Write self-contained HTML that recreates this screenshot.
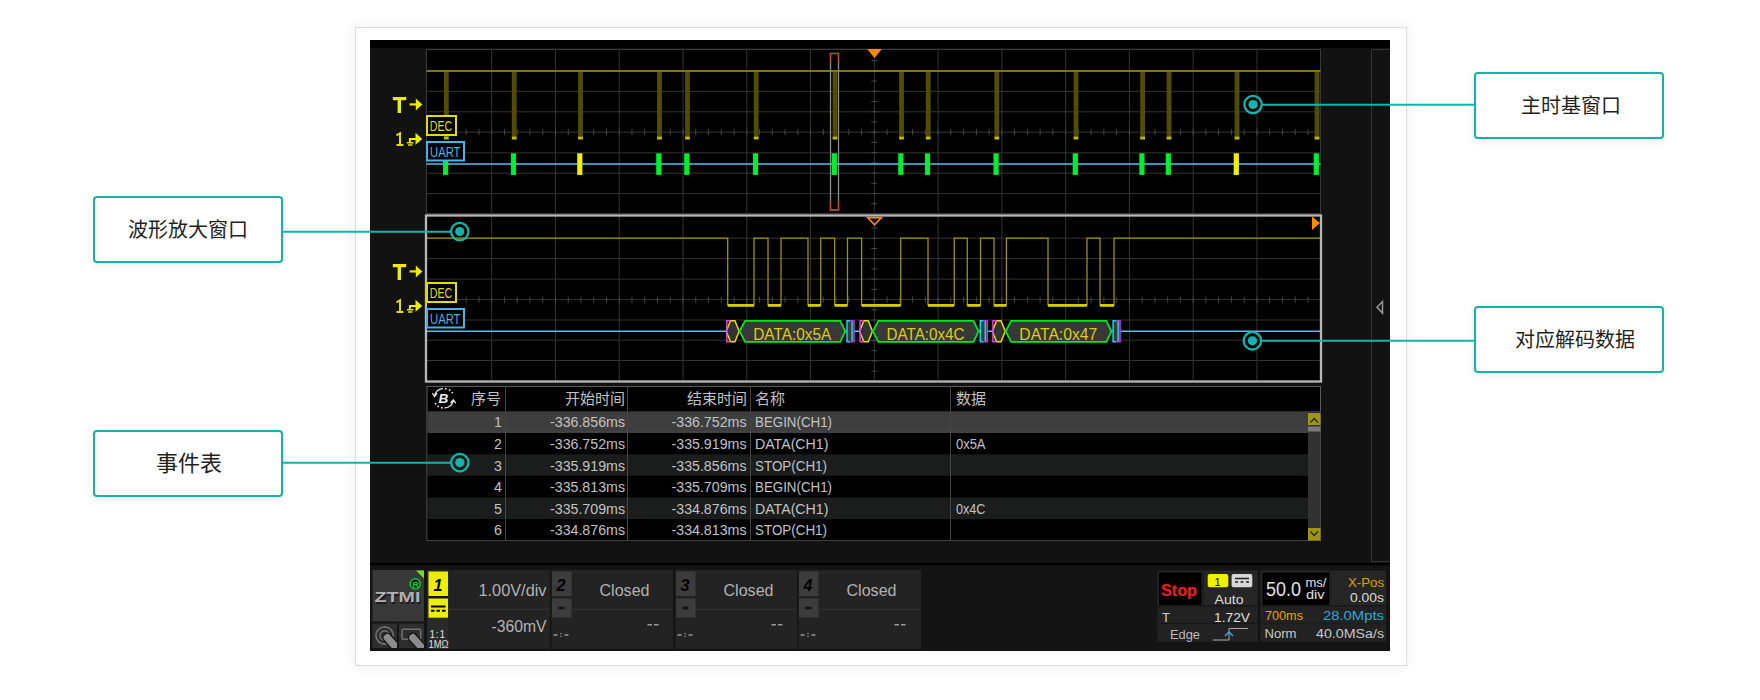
<!DOCTYPE html>
<html lang="zh-CN"><head><meta charset="utf-8">
<style>
html,body{margin:0;padding:0;background:#fff;width:1760px;height:700px;overflow:hidden;}
body{position:relative;font-family:"Liberation Sans", sans-serif;}
.card{position:absolute;left:355px;top:27px;width:1050px;height:637px;border:1px solid #dcdcdc;background:#fff;box-shadow:0 0 14px rgba(0,0,0,0.07);}
.box{position:absolute;width:186px;height:63px;border:2px solid #13b2ab;border-radius:4px;background:#fff;box-shadow:0 2px 10px rgba(0,0,0,0.08);
 font-size:20px;color:#231f1f;display:flex;align-items:center;justify-content:center;line-height:1;}
svg{position:absolute;left:0;top:0;}
svg text{font-family:"Liberation Sans", sans-serif;}
</style></head><body>
<div class="card"></div>
<svg width="1760" height="700" viewBox="0 0 1760 700"><rect x="370" y="40" width="1020" height="611" fill="#121212"/><rect x="370" y="40" width="1020" height="8" fill="#000"/><path d="M1390 49.5 H1371.5 V561.5 H1390" fill="none" stroke="#343434" stroke-width="1"/><rect x="426.5" y="49.5" width="894.0" height="164.0" fill="#000" stroke="#383838" stroke-width="1"/><path d="M426.5 71.0H1320.5M426.5 91.4H1320.5M426.5 111.8H1320.5M426.5 132.2H1320.5M426.5 152.8H1320.5M426.5 173.2H1320.5M426.5 193.6H1320.5M491.7 49.5V213.5M555.47 49.5V213.5M619.24 49.5V213.5M683.01 49.5V213.5M746.78 49.5V213.5M810.55 49.5V213.5M874.32 49.5V213.5M938.09 49.5V213.5M1001.86 49.5V213.5M1065.63 49.5V213.5M1129.4 49.5V213.5M1193.17 49.5V213.5M1256.94 49.5V213.5" stroke="#333333" stroke-width="1" fill="none"/><path d="M440.68 129.2V135.2M453.44 129.2V135.2M466.19 129.2V135.2M478.95 129.2V135.2M491.7 129.2V135.2M504.45 129.2V135.2M517.21 129.2V135.2M529.96 129.2V135.2M542.72 129.2V135.2M555.47 129.2V135.2M568.22 129.2V135.2M580.98 129.2V135.2M593.73 129.2V135.2M606.49 129.2V135.2M619.24 129.2V135.2M631.99 129.2V135.2M644.75 129.2V135.2M657.5 129.2V135.2M670.26 129.2V135.2M683.01 129.2V135.2M695.76 129.2V135.2M708.52 129.2V135.2M721.27 129.2V135.2M734.03 129.2V135.2M746.78 129.2V135.2M759.53 129.2V135.2M772.29 129.2V135.2M785.04 129.2V135.2M797.8 129.2V135.2M810.55 129.2V135.2M823.3 129.2V135.2M836.06 129.2V135.2M848.81 129.2V135.2M861.57 129.2V135.2M874.32 129.2V135.2M887.07 129.2V135.2M899.83 129.2V135.2M912.58 129.2V135.2M925.34 129.2V135.2M938.09 129.2V135.2M950.84 129.2V135.2M963.6 129.2V135.2M976.35 129.2V135.2M989.11 129.2V135.2M1001.86 129.2V135.2M1014.61 129.2V135.2M1027.37 129.2V135.2M1040.12 129.2V135.2M1052.88 129.2V135.2M1065.63 129.2V135.2M1078.38 129.2V135.2M1091.14 129.2V135.2M1103.89 129.2V135.2M1116.65 129.2V135.2M1129.4 129.2V135.2M1142.15 129.2V135.2M1154.91 129.2V135.2M1167.66 129.2V135.2M1180.42 129.2V135.2M1193.17 129.2V135.2M1205.92 129.2V135.2M1218.68 129.2V135.2M1231.43 129.2V135.2M1244.19 129.2V135.2M1256.94 129.2V135.2M1269.69 129.2V135.2M1282.45 129.2V135.2M1295.2 129.2V135.2M1307.96 129.2V135.2M871.32 50.44H877.32M871.32 60.66H877.32M871.32 70.88H877.32M871.32 81.1H877.32M871.32 91.32H877.32M871.32 101.54H877.32M871.32 111.76H877.32M871.32 121.98H877.32M871.32 132.2H877.32M871.32 142.42H877.32M871.32 152.64H877.32M871.32 162.86H877.32M871.32 173.08H877.32M871.32 183.3H877.32M871.32 193.52H877.32M871.32 203.74H877.32" stroke="#474747" stroke-width="1"/><line x1="426.5" y1="71" x2="1320.5" y2="71" stroke="#a09800" stroke-width="1.6"/><rect x="443.9" y="72" width="4.8" height="64" fill="#524d00"/><rect x="443.9" y="136.4" width="4.8" height="3.1" fill="#c4bc00"/><rect x="511.8" y="72" width="4.8" height="64" fill="#524d00"/><rect x="511.8" y="136.4" width="4.8" height="3.1" fill="#c4bc00"/><rect x="578.1" y="72" width="4.8" height="64" fill="#524d00"/><rect x="578.1" y="136.4" width="4.8" height="3.1" fill="#c4bc00"/><rect x="657.1" y="72" width="4.8" height="64" fill="#524d00"/><rect x="657.1" y="136.4" width="4.8" height="3.1" fill="#c4bc00"/><rect x="685.1" y="72" width="4.8" height="64" fill="#524d00"/><rect x="685.1" y="136.4" width="4.8" height="3.1" fill="#c4bc00"/><rect x="753.8" y="72" width="4.8" height="64" fill="#524d00"/><rect x="753.8" y="136.4" width="4.8" height="3.1" fill="#c4bc00"/><rect x="832.6" y="72" width="4.8" height="64" fill="#524d00"/><rect x="832.6" y="136.4" width="4.8" height="3.1" fill="#c4bc00"/><rect x="899.1" y="72" width="4.8" height="64" fill="#524d00"/><rect x="899.1" y="136.4" width="4.8" height="3.1" fill="#c4bc00"/><rect x="925.8" y="72" width="4.8" height="64" fill="#524d00"/><rect x="925.8" y="136.4" width="4.8" height="3.1" fill="#c4bc00"/><rect x="994.4" y="72" width="4.8" height="64" fill="#524d00"/><rect x="994.4" y="136.4" width="4.8" height="3.1" fill="#c4bc00"/><rect x="1073.6" y="72" width="4.8" height="64" fill="#524d00"/><rect x="1073.6" y="136.4" width="4.8" height="3.1" fill="#c4bc00"/><rect x="1140.2" y="72" width="4.8" height="64" fill="#524d00"/><rect x="1140.2" y="136.4" width="4.8" height="3.1" fill="#c4bc00"/><rect x="1166.6" y="72" width="4.8" height="64" fill="#524d00"/><rect x="1166.6" y="136.4" width="4.8" height="3.1" fill="#c4bc00"/><rect x="1234.6" y="72" width="4.8" height="64" fill="#524d00"/><rect x="1234.6" y="136.4" width="4.8" height="3.1" fill="#c4bc00"/><rect x="1314.6" y="72" width="4.8" height="64" fill="#524d00"/><rect x="1314.6" y="136.4" width="4.8" height="3.1" fill="#c4bc00"/><rect x="830.5" y="53.5" width="8" height="156.5" fill="none" stroke="#8a8a8a" stroke-width="1.3"/><path d="M830.5 62V53.5H838.5V62M830.5 201.5V210H838.5V201.5" fill="none" stroke="#c03838" stroke-width="1.5"/><path d="M867.2 49 H881.8 L874.5 58 Z" fill="#ff8a00"/><line x1="426.5" y1="164" x2="1320.5" y2="164" stroke="#55c0ee" stroke-width="1.5"/><rect x="443.0" y="153.3" width="5.2" height="21.6" fill="#00ee30"/><rect x="510.9" y="153.3" width="5.2" height="21.6" fill="#00ee30"/><rect x="577.2" y="153.3" width="5.2" height="21.6" fill="#f0f000"/><rect x="656.2" y="153.3" width="5.2" height="21.6" fill="#00ee30"/><rect x="684.2" y="153.3" width="5.2" height="21.6" fill="#00ee30"/><rect x="752.9" y="153.3" width="5.2" height="21.6" fill="#00ee30"/><rect x="831.7" y="153.3" width="5.2" height="21.6" fill="#00ee30"/><rect x="898.2" y="153.3" width="5.2" height="21.6" fill="#00ee30"/><rect x="924.9" y="153.3" width="5.2" height="21.6" fill="#00ee30"/><rect x="993.5" y="153.3" width="5.2" height="21.6" fill="#00ee30"/><rect x="1072.7" y="153.3" width="5.2" height="21.6" fill="#00ee30"/><rect x="1139.3" y="153.3" width="5.2" height="21.6" fill="#00ee30"/><rect x="1165.7" y="153.3" width="5.2" height="21.6" fill="#00ee30"/><rect x="1233.7" y="153.3" width="5.2" height="21.6" fill="#f0f000"/><rect x="1313.7" y="153.3" width="5.2" height="21.6" fill="#00ee30"/><rect x="426.5" y="215.5" width="894.0" height="166.0" fill="#000"/><rect x="426.5" y="215.5" width="894.0" height="166.0" fill="#000" stroke="#383838" stroke-width="1"/><path d="M426.5 238.2H1320.5M426.5 258.6H1320.5M426.5 279.1H1320.5M426.5 299.6H1320.5M426.5 320.0H1320.5M426.5 340.2H1320.5M426.5 360.5H1320.5M491.7 215.5V381.5M555.47 215.5V381.5M619.24 215.5V381.5M683.01 215.5V381.5M746.78 215.5V381.5M810.55 215.5V381.5M874.32 215.5V381.5M938.09 215.5V381.5M1001.86 215.5V381.5M1065.63 215.5V381.5M1129.4 215.5V381.5M1193.17 215.5V381.5M1256.94 215.5V381.5" stroke="#333333" stroke-width="1" fill="none"/><path d="M440.68 296.6V302.6M453.44 296.6V302.6M466.19 296.6V302.6M478.95 296.6V302.6M491.7 296.6V302.6M504.45 296.6V302.6M517.21 296.6V302.6M529.96 296.6V302.6M542.72 296.6V302.6M555.47 296.6V302.6M568.22 296.6V302.6M580.98 296.6V302.6M593.73 296.6V302.6M606.49 296.6V302.6M619.24 296.6V302.6M631.99 296.6V302.6M644.75 296.6V302.6M657.5 296.6V302.6M670.26 296.6V302.6M683.01 296.6V302.6M695.76 296.6V302.6M708.52 296.6V302.6M721.27 296.6V302.6M734.03 296.6V302.6M746.78 296.6V302.6M759.53 296.6V302.6M772.29 296.6V302.6M785.04 296.6V302.6M797.8 296.6V302.6M810.55 296.6V302.6M823.3 296.6V302.6M836.06 296.6V302.6M848.81 296.6V302.6M861.57 296.6V302.6M874.32 296.6V302.6M887.07 296.6V302.6M899.83 296.6V302.6M912.58 296.6V302.6M925.34 296.6V302.6M938.09 296.6V302.6M950.84 296.6V302.6M963.6 296.6V302.6M976.35 296.6V302.6M989.11 296.6V302.6M1001.86 296.6V302.6M1014.61 296.6V302.6M1027.37 296.6V302.6M1040.12 296.6V302.6M1052.88 296.6V302.6M1065.63 296.6V302.6M1078.38 296.6V302.6M1091.14 296.6V302.6M1103.89 296.6V302.6M1116.65 296.6V302.6M1129.4 296.6V302.6M1142.15 296.6V302.6M1154.91 296.6V302.6M1167.66 296.6V302.6M1180.42 296.6V302.6M1193.17 296.6V302.6M1205.92 296.6V302.6M1218.68 296.6V302.6M1231.43 296.6V302.6M1244.19 296.6V302.6M1256.94 296.6V302.6M1269.69 296.6V302.6M1282.45 296.6V302.6M1295.2 296.6V302.6M1307.96 296.6V302.6M871.32 217.84H877.32M871.32 228.06H877.32M871.32 238.28H877.32M871.32 248.5H877.32M871.32 258.72H877.32M871.32 268.94H877.32M871.32 279.16H877.32M871.32 289.38H877.32M871.32 299.6H877.32M871.32 309.82H877.32M871.32 320.04H877.32M871.32 330.26H877.32M871.32 340.48H877.32M871.32 350.7H877.32M871.32 360.92H877.32M871.32 371.14H877.32M871.32 381.36H877.32" stroke="#474747" stroke-width="1"/><path d="M426.5 238H727.7V305.2H754V238H768V305.2H781V238H808V305.2H820.7V238H834.7V305.2H847.5V238H861.6V305.2H900.7V238H928V305.2H954.2V238H967.3V305.2H980.5V238H994V305.2H1006.4V238H1048V305.2H1087V238H1100V305.2H1114V238H1320.5" fill="none" stroke="#a09600" stroke-width="1.25"/><rect x="727.7" y="304.0" width="26.299999999999955" height="2.8" fill="#d4cb00"/><rect x="768" y="304.0" width="13" height="2.8" fill="#d4cb00"/><rect x="808" y="304.0" width="12.700000000000045" height="2.8" fill="#d4cb00"/><rect x="834.7" y="304.0" width="12.799999999999955" height="2.8" fill="#d4cb00"/><rect x="861.6" y="304.0" width="39.10000000000002" height="2.8" fill="#d4cb00"/><rect x="928" y="304.0" width="26.200000000000045" height="2.8" fill="#d4cb00"/><rect x="967.3" y="304.0" width="13.200000000000045" height="2.8" fill="#d4cb00"/><rect x="994" y="304.0" width="12.399999999999977" height="2.8" fill="#d4cb00"/><rect x="1048" y="304.0" width="39" height="2.8" fill="#d4cb00"/><rect x="1100" y="304.0" width="14" height="2.8" fill="#d4cb00"/><line x1="426.5" y1="331.2" x2="1320.5" y2="331.2" stroke="#55c0ee" stroke-width="1.5"/><path d="M730.5 320.8H734.9000000000001L739.2 331.3L734.9000000000001 341.8H730.5L726.2 331.3Z" fill="#333" stroke="#e8e000" stroke-width="1.5"/><path d="M730.7 320.8H726.8000000000001V341.8H730.7" fill="none" stroke="#e040e0" stroke-width="1.5"/><path d="M745.1 320.8H840.2L845.2 331.3L840.2 341.8H745.1L739.6 331.3Z" fill="#383838" stroke="#00e81c" stroke-width="1.8"/><text x="753.2" y="339.6" font-size="16" fill="#dcd200" textLength="78" lengthAdjust="spacingAndGlyphs">DATA:0x5A</text><rect x="847.2" y="320.8" width="7" height="21.0" fill="#3a3a3a"/><path d="M850.2 320.8H847.0V341.8H850.2M852.0 320.8V341.8" fill="none" stroke="#10d8f0" stroke-width="1.5"/><path d="M850.2 320.8H854.0V341.8H850.2" fill="none" stroke="#c030e0" stroke-width="1.5"/><path d="M863.8 320.8H868.2L872.5 331.3L868.2 341.8H863.8L859.5 331.3Z" fill="#333" stroke="#e8e000" stroke-width="1.5"/><path d="M864.0 320.8H860.1V341.8H864.0" fill="none" stroke="#e040e0" stroke-width="1.5"/><path d="M878.4 320.8H973.5L978.5 331.3L973.5 341.8H878.4L872.9 331.3Z" fill="#383838" stroke="#00e81c" stroke-width="1.8"/><text x="886.5" y="339.6" font-size="16" fill="#dcd200" textLength="78" lengthAdjust="spacingAndGlyphs">DATA:0x4C</text><rect x="980.5" y="320.8" width="7" height="21.0" fill="#3a3a3a"/><path d="M983.5 320.8H980.3V341.8H983.5M985.3 320.8V341.8" fill="none" stroke="#10d8f0" stroke-width="1.5"/><path d="M983.5 320.8H987.3V341.8H983.5" fill="none" stroke="#c030e0" stroke-width="1.5"/><path d="M996.5999999999999 320.8H1001.0L1005.3 331.3L1001.0 341.8H996.5999999999999L992.3 331.3Z" fill="#333" stroke="#e8e000" stroke-width="1.5"/><path d="M996.8 320.8H992.9V341.8H996.8" fill="none" stroke="#e040e0" stroke-width="1.5"/><path d="M1011.1999999999999 320.8H1106.3L1111.3 331.3L1106.3 341.8H1011.1999999999999L1005.6999999999999 331.3Z" fill="#383838" stroke="#00e81c" stroke-width="1.8"/><text x="1019.3" y="339.6" font-size="16" fill="#dcd200" textLength="78" lengthAdjust="spacingAndGlyphs">DATA:0x47</text><rect x="1113.3" y="320.8" width="7" height="21.0" fill="#3a3a3a"/><path d="M1116.3 320.8H1113.1V341.8H1116.3M1118.1 320.8V341.8" fill="none" stroke="#10d8f0" stroke-width="1.5"/><path d="M1116.3 320.8H1120.1V341.8H1116.3" fill="none" stroke="#c030e0" stroke-width="1.5"/><rect x="426" y="215.5" width="895" height="166" fill="none" stroke="#b8b8b8" stroke-width="2.3"/><path d="M867.8 217.8 H881.2 L874.5 224.8 Z" fill="none" stroke="#ff8a00" stroke-width="1.6"/><path d="M1312 216.5 V230 L1320 223 Z" fill="#ff8a00"/><path d="M1382.5 301.5 V313 L1377 307.2 Z" fill="none" stroke="#9a9a9a" stroke-width="1.5"/><path d="M392.8 97.1H406.2V100.2H401V112.9H397.6V100.2H392.8Z" fill="#ecec00"/><path d="M409.6 104.4H416.5" stroke="#ecec00" stroke-width="2.2"/><path d="M415.8 98.5L422.3 104.4L415.8 110.5Z" fill="#ecec00"/><rect x="427" y="116" width="29" height="19" fill="#000" stroke="#e2dc00" stroke-width="2"/><text x="429.8" y="130.7" font-size="14.5" fill="#e2dc00" textLength="22.3" lengthAdjust="spacingAndGlyphs">DEC</text><path d="M396.5 135.3L400 133.2V145M396.5 145H403.4" fill="none" stroke="#e2dc00" stroke-width="2"/><path d="M409.9 142.7V139H416" fill="none" stroke="#ecec00" stroke-width="2"/><path d="M406.8 142.7H413.5M408 145H412.5" stroke="#e2dc00" stroke-width="1.6"/><path d="M415.5 132.8L422.2 139L415.5 144.8Z" fill="#ecec00"/><rect x="427" y="142" width="37" height="18.5" fill="#000" stroke="#48b4e4" stroke-width="2"/><text x="430" y="156.5" font-size="14.5" fill="#48b4e4" textLength="30.5" lengthAdjust="spacingAndGlyphs">UART</text><path d="M392.8 264.1H406.2V267.2H401V279.9H397.6V267.2H392.8Z" fill="#ecec00"/><path d="M409.6 271.4H416.5" stroke="#ecec00" stroke-width="2.2"/><path d="M415.8 265.5L422.3 271.4L415.8 277.5Z" fill="#ecec00"/><rect x="427" y="283" width="29" height="19" fill="#000" stroke="#e2dc00" stroke-width="2"/><text x="429.8" y="297.7" font-size="14.5" fill="#e2dc00" textLength="22.3" lengthAdjust="spacingAndGlyphs">DEC</text><path d="M396.5 302.3L400 300.2V312M396.5 312H403.4" fill="none" stroke="#e2dc00" stroke-width="2"/><path d="M409.9 309.7V306H416" fill="none" stroke="#ecec00" stroke-width="2"/><path d="M406.8 309.7H413.5M408 312H412.5" stroke="#e2dc00" stroke-width="1.6"/><path d="M415.5 299.8L422.2 306L415.5 311.8Z" fill="#ecec00"/><rect x="427" y="309" width="37" height="18.5" fill="#000" stroke="#48b4e4" stroke-width="2"/><text x="430" y="323.5" font-size="14.5" fill="#48b4e4" textLength="30.5" lengthAdjust="spacingAndGlyphs">UART</text><rect x="427" y="386.5" width="893.5" height="154.0" fill="#000" stroke="#5a5a5a" stroke-width="1"/><rect x="427.5" y="411.3" width="880.5" height="21.4" fill="#3e3e3e"/><rect x="427.5" y="432.7" width="880.5" height="21.6" fill="#000"/><rect x="427.5" y="454.3" width="880.5" height="21.6" fill="#1a1d1b"/><rect x="427.5" y="475.9" width="880.5" height="21.6" fill="#000"/><rect x="427.5" y="497.5" width="880.5" height="21.6" fill="#1a1d1b"/><rect x="427.5" y="519.1" width="880.5" height="21.2" fill="#000"/><line x1="427.5" y1="432.2" x2="1308" y2="432.2" stroke="#505050" stroke-width="1"/><line x1="505.5" y1="386.5" x2="505.5" y2="540.5" stroke="#444" stroke-width="1"/><line x1="627.5" y1="386.5" x2="627.5" y2="540.5" stroke="#444" stroke-width="1"/><line x1="750.5" y1="386.5" x2="750.5" y2="540.5" stroke="#444" stroke-width="1"/><line x1="950.5" y1="386.5" x2="950.5" y2="540.5" stroke="#444" stroke-width="1"/><rect x="1308" y="411" width="12.5" height="129.5" fill="#323232"/><rect x="1308" y="413" width="12.5" height="12" fill="#9c9610"/><path d="M1310.5 422.5L1314.2 418.5L1318 422.5" fill="none" stroke="#222" stroke-width="1.2"/><rect x="1308" y="426.5" width="12.5" height="5" fill="#7a7a7a"/><rect x="1308" y="528" width="12.5" height="12.5" fill="#9c9610"/><path d="M1310.5 531.5L1314.2 535.5L1318 531.5" fill="none" stroke="#222" stroke-width="1.2"/><text x="501" y="404" font-size="15" fill="#c2c2c2" text-anchor="end">序号</text><text x="625" y="404" font-size="15" fill="#c2c2c2" text-anchor="end">开始时间</text><text x="746.5" y="404" font-size="15" fill="#c2c2c2" text-anchor="end">结束时间</text><text x="755" y="404" font-size="15" fill="#c2c2c2">名称</text><text x="955.5" y="404" font-size="15" fill="#c2c2c2">数据</text><g fill="none" stroke="#e4e4e4" stroke-width="1.3" stroke-linecap="round"><path d="M442.5 388.6A9.5 9.5 0 0 0 434.6 395.7M432.6 393.5L434.6 396.6L436.9 393.7"/><path d="M445 407.9A9.5 9.5 0 0 0 453.3 400.6M450.9 402.7L453.3 399.9L455.5 402.9"/></g><g fill="#dcdcdc"><circle cx="445.8" cy="388.8" r="0.95"/><circle cx="449.7" cy="390" r="0.95"/><circle cx="452.3" cy="392.6" r="0.95"/><circle cx="435.6" cy="403.8" r="0.95"/><circle cx="438.2" cy="406.4" r="0.95"/><circle cx="441.9" cy="407.7" r="0.95"/></g><text x="438.6" y="403.2" font-size="13.6" font-weight="bold" font-style="italic" fill="#f0f0f0">B</text><text x="502" y="427.3" font-size="14.2" fill="#c2c2c2" text-anchor="end">1</text><text x="625" y="427.3" font-size="14.2" fill="#c2c2c2" text-anchor="end" textLength="75" lengthAdjust="spacingAndGlyphs">-336.856ms</text><text x="746.5" y="427.3" font-size="14.2" fill="#c2c2c2" text-anchor="end" textLength="75" lengthAdjust="spacingAndGlyphs">-336.752ms</text><text x="755" y="427.3" font-size="14.2" fill="#c2c2c2" textLength="77" lengthAdjust="spacingAndGlyphs">BEGIN(CH1)</text><text x="502" y="448.9" font-size="14.2" fill="#c2c2c2" text-anchor="end">2</text><text x="625" y="448.9" font-size="14.2" fill="#c2c2c2" text-anchor="end" textLength="75" lengthAdjust="spacingAndGlyphs">-336.752ms</text><text x="746.5" y="448.9" font-size="14.2" fill="#c2c2c2" text-anchor="end" textLength="75" lengthAdjust="spacingAndGlyphs">-335.919ms</text><text x="755" y="448.9" font-size="14.2" fill="#c2c2c2" textLength="73.4" lengthAdjust="spacingAndGlyphs">DATA(CH1)</text><text x="956" y="448.9" font-size="14.2" fill="#c2c2c2" textLength="29.5" lengthAdjust="spacingAndGlyphs">0x5A</text><text x="502" y="470.5" font-size="14.2" fill="#c2c2c2" text-anchor="end">3</text><text x="625" y="470.5" font-size="14.2" fill="#c2c2c2" text-anchor="end" textLength="75" lengthAdjust="spacingAndGlyphs">-335.919ms</text><text x="746.5" y="470.5" font-size="14.2" fill="#c2c2c2" text-anchor="end" textLength="75" lengthAdjust="spacingAndGlyphs">-335.856ms</text><text x="755" y="470.5" font-size="14.2" fill="#c2c2c2" textLength="72" lengthAdjust="spacingAndGlyphs">STOP(CH1)</text><text x="502" y="492.2" font-size="14.2" fill="#c2c2c2" text-anchor="end">4</text><text x="625" y="492.2" font-size="14.2" fill="#c2c2c2" text-anchor="end" textLength="75" lengthAdjust="spacingAndGlyphs">-335.813ms</text><text x="746.5" y="492.2" font-size="14.2" fill="#c2c2c2" text-anchor="end" textLength="75" lengthAdjust="spacingAndGlyphs">-335.709ms</text><text x="755" y="492.2" font-size="14.2" fill="#c2c2c2" textLength="77" lengthAdjust="spacingAndGlyphs">BEGIN(CH1)</text><text x="502" y="513.8" font-size="14.2" fill="#c2c2c2" text-anchor="end">5</text><text x="625" y="513.8" font-size="14.2" fill="#c2c2c2" text-anchor="end" textLength="75" lengthAdjust="spacingAndGlyphs">-335.709ms</text><text x="746.5" y="513.8" font-size="14.2" fill="#c2c2c2" text-anchor="end" textLength="75" lengthAdjust="spacingAndGlyphs">-334.876ms</text><text x="755" y="513.8" font-size="14.2" fill="#c2c2c2" textLength="73.4" lengthAdjust="spacingAndGlyphs">DATA(CH1)</text><text x="956" y="513.8" font-size="14.2" fill="#c2c2c2" textLength="29.5" lengthAdjust="spacingAndGlyphs">0x4C</text><text x="502" y="535.4" font-size="14.2" fill="#c2c2c2" text-anchor="end">6</text><text x="625" y="535.4" font-size="14.2" fill="#c2c2c2" text-anchor="end" textLength="75" lengthAdjust="spacingAndGlyphs">-334.876ms</text><text x="746.5" y="535.4" font-size="14.2" fill="#c2c2c2" text-anchor="end" textLength="75" lengthAdjust="spacingAndGlyphs">-334.813ms</text><text x="755" y="535.4" font-size="14.2" fill="#c2c2c2" textLength="72" lengthAdjust="spacingAndGlyphs">STOP(CH1)</text><rect x="370" y="563" width="1020" height="2.5" fill="#000"/><rect x="370" y="565.5" width="1020" height="85.5" fill="#141414"/><rect x="372.5" y="570" width="51.5" height="51.5" fill="#383838"/><path d="M416 570.5H424V578.5Z" fill="#6ee020"/><circle cx="415.2" cy="583.9" r="5.1" fill="#1a1a1a" stroke="#10c020" stroke-width="1.6"/><text x="412.5" y="587.5" font-size="9" font-weight="bold" fill="#10d020">R</text><text x="375.5" y="603.5" font-size="15" font-weight="bold" fill="#1a1a1a" textLength="46" lengthAdjust="spacingAndGlyphs">ZTMI</text><text x="374.5" y="602.2" font-size="15" font-weight="bold" fill="#b0b0b0" textLength="46" lengthAdjust="spacingAndGlyphs">ZTMI</text><rect x="372.5" y="623.5" width="24.5" height="24.5" fill="#2e2e2e"/><rect x="399" y="623.5" width="25" height="24.5" fill="#2e2e2e"/><clipPath id="c1"><rect x="372.5" y="623.5" width="24.5" height="24.5"/></clipPath><clipPath id="c2"><rect x="399" y="623.5" width="25" height="24.5"/></clipPath><g clip-path="url(#c1)"><g fill="none" stroke="#707070" stroke-width="1.6"><circle cx="384.6" cy="635.5" r="8.6"/><circle cx="384.6" cy="635.5" r="4.6"/></g><rect x="387" y="632" width="8.5" height="20" rx="3.8" fill="#8c8c8c" stroke="#151515" stroke-width="1.3" transform="rotate(-42 391.2 642)"/></g><g clip-path="url(#c2)"><rect x="402" y="629.2" width="18.7" height="10" rx="1.5" fill="none" stroke="#707070" stroke-width="1.6"/><rect x="412.5" y="632" width="8.5" height="20" rx="3.8" fill="#8c8c8c" stroke="#151515" stroke-width="1.3" transform="rotate(-42 416.7 642)"/></g><rect x="427" y="570" width="123" height="79" fill="#232323"/><rect x="427" y="570" width="21.5" height="79" fill="#2a2a2a"/><rect x="428.5" y="571.5" width="19.5" height="24.5" fill="#eeee00"/><rect x="428.5" y="598.3" width="19.5" height="19.4" fill="#eeee00"/><rect x="428.5" y="596" width="19.5" height="2.3" fill="#151515"/><text x="433.5" y="590.5" font-size="16" font-weight="bold" font-style="italic" fill="#000">1</text><path d="M431 606.5H445.5" stroke="#000" stroke-width="2"/><path d="M431 610.8H434.5M436.5 610.8H440M442 610.8H445.5" stroke="#000" stroke-width="2"/><text x="429.5" y="637.8" font-size="10" fill="#e0e0e0" textLength="15.5" lengthAdjust="spacing">1:1</text><text x="428.5" y="647.5" font-size="10" fill="#e0e0e0" textLength="20" lengthAdjust="spacingAndGlyphs">1MΩ</text><line x1="448" y1="609.3" x2="550" y2="609.3" stroke="#343434" stroke-width="1"/><text x="546.5" y="596" font-size="16" fill="#b2b2b2" text-anchor="end" textLength="68" lengthAdjust="spacingAndGlyphs">1.00V/div</text><text x="546.5" y="632" font-size="16" fill="#b2b2b2" text-anchor="end" textLength="55" lengthAdjust="spacingAndGlyphs">-360mV</text><rect x="551.5" y="570" width="121.5" height="79" fill="#232323"/><rect x="552.0" y="571.5" width="19.5" height="24.5" fill="#3c3c3c"/><rect x="552.0" y="598.5" width="19.5" height="19" fill="#3c3c3c"/><text x="556.5" y="591" font-size="16" font-weight="bold" font-style="italic" fill="#000">2</text><path d="M558.5 608H564.5" stroke="#111" stroke-width="2.6"/><line x1="571.5" y1="609.3" x2="672.5" y2="609.3" stroke="#343434" stroke-width="1"/><text x="599.5" y="596" font-size="16" fill="#b2b2b2" textLength="50" lengthAdjust="spacingAndGlyphs">Closed</text><path d="M647.5 624.8H652.0M654.0 624.8H658.5" stroke="#9a9a9a" stroke-width="1.5"/><path d="M553.5 635H557.5M564.5 635H568.5M561.0 633V634.2M561.0 635.8V637" stroke="#9a9a9a" stroke-width="1.3"/><rect x="675.5" y="570" width="121.5" height="79" fill="#232323"/><rect x="676.0" y="571.5" width="19.5" height="24.5" fill="#3c3c3c"/><rect x="676.0" y="598.5" width="19.5" height="19" fill="#3c3c3c"/><text x="680.5" y="591" font-size="16" font-weight="bold" font-style="italic" fill="#000">3</text><path d="M682.5 608H688.5" stroke="#111" stroke-width="2.6"/><line x1="695.5" y1="609.3" x2="796.5" y2="609.3" stroke="#343434" stroke-width="1"/><text x="723.5" y="596" font-size="16" fill="#b2b2b2" textLength="50" lengthAdjust="spacingAndGlyphs">Closed</text><path d="M771.5 624.8H776.0M778.0 624.8H782.5" stroke="#9a9a9a" stroke-width="1.5"/><path d="M677.5 635H681.5M688.5 635H692.5M685.0 633V634.2M685.0 635.8V637" stroke="#9a9a9a" stroke-width="1.3"/><rect x="798.5" y="570" width="122.5" height="79" fill="#232323"/><rect x="799.0" y="571.5" width="19.5" height="24.5" fill="#3c3c3c"/><rect x="799.0" y="598.5" width="19.5" height="19" fill="#3c3c3c"/><text x="803.5" y="591" font-size="16" font-weight="bold" font-style="italic" fill="#000">4</text><path d="M805.5 608H811.5" stroke="#111" stroke-width="2.6"/><line x1="818.5" y1="609.3" x2="919.5" y2="609.3" stroke="#343434" stroke-width="1"/><text x="846.5" y="596" font-size="16" fill="#b2b2b2" textLength="50" lengthAdjust="spacingAndGlyphs">Closed</text><path d="M894.5 624.8H899.0M901.0 624.8H905.5" stroke="#9a9a9a" stroke-width="1.5"/><path d="M800.5 635H804.5M811.5 635H815.5M808.0 633V634.2M808.0 635.8V637" stroke="#9a9a9a" stroke-width="1.3"/><rect x="1157.5" y="570.5" width="100" height="71" fill="#262626"/><rect x="1159" y="572.5" width="42.5" height="32.5" fill="#000"/><text x="1161" y="595.5" font-size="16" font-weight="bold" fill="#ff1a1a" textLength="36" lengthAdjust="spacingAndGlyphs">Stop</text><rect x="1207.7" y="574" width="20.6" height="13.3" rx="2" fill="#f0f000"/><text x="1214.5" y="585.5" font-size="11" fill="#000">1</text><rect x="1231.6" y="574" width="20.7" height="13.3" rx="2" fill="#d8d8d8"/><path d="M1235 578.5H1249M1235 582H1238M1240.5 582H1243.5M1246 582H1249" stroke="#222" stroke-width="1.4"/><text x="1214.5" y="603.5" font-size="12.5" fill="#dcdcdc" textLength="29" lengthAdjust="spacingAndGlyphs">Auto</text><rect x="1158.5" y="606.5" width="98" height="17" fill="#222"/><rect x="1158.5" y="624.5" width="98" height="16.5" fill="#222"/><text x="1162" y="622" font-size="13" fill="#d0d0d0">T</text><text x="1250" y="622" font-size="12.5" fill="#e0e0e0" text-anchor="end" textLength="36" lengthAdjust="spacingAndGlyphs">1.72V</text><text x="1170" y="639" font-size="12.5" fill="#bcbcbc" textLength="30" lengthAdjust="spacingAndGlyphs">Edge</text><path d="M1213 640H1229V628.5H1248" fill="none" stroke="#aaa" stroke-width="1"/><path d="M1225 636L1229 632L1233 636" fill="none" stroke="#3aa8e0" stroke-width="1.5"/><rect x="1260.5" y="570.5" width="125.5" height="71" fill="#262626"/><rect x="1262.6" y="572.6" width="66.4" height="32.4" fill="#000"/><text x="1266" y="596" font-size="20" fill="#e0e0e0" textLength="35" lengthAdjust="spacingAndGlyphs">50.0</text><text x="1305.5" y="587" font-size="12" fill="#e0e0e0" textLength="21" lengthAdjust="spacingAndGlyphs">ms/</text><text x="1306" y="598.5" font-size="12" fill="#e0e0e0" textLength="18.5" lengthAdjust="spacingAndGlyphs">div</text><path d="M1261 606H1386M1261 623.6H1386M1158 606H1257M1158 623.6H1257" stroke="#161616" stroke-width="1.3"/><path d="M1330 571V605.5M1203.2 571V605.5" stroke="#1c1c1c" stroke-width="1.3"/><text x="1384" y="587" font-size="12" fill="#e0a000" text-anchor="end" textLength="36" lengthAdjust="spacingAndGlyphs">X-Pos</text><text x="1384" y="602" font-size="12.5" fill="#d8d8d8" text-anchor="end" textLength="34" lengthAdjust="spacingAndGlyphs">0.00s</text><rect x="1261.5" y="606.5" width="123.5" height="17" fill="#222"/><rect x="1261.5" y="624.5" width="123.5" height="16.5" fill="#222"/><text x="1265" y="620" font-size="12.5" fill="#e8a400" textLength="38" lengthAdjust="spacingAndGlyphs">700ms</text><text x="1384" y="620" font-size="12.5" fill="#30a8d8" text-anchor="end" textLength="61" lengthAdjust="spacingAndGlyphs">28.0Mpts</text><text x="1264.5" y="638" font-size="12.5" fill="#c8c8c8" textLength="32" lengthAdjust="spacingAndGlyphs">Norm</text><text x="1384" y="638" font-size="12.5" fill="#c8c8c8" text-anchor="end" textLength="68" lengthAdjust="spacingAndGlyphs">40.0MSa/s</text></svg>
<div class="box" style="left:93px;top:196px;">波形放大窗口</div>
<div class="box" style="left:93px;top:430px;padding-left:1px;width:185px;font-size:22px;">事件表</div>
<div class="box" style="left:1474px;top:72px;padding-left:3px;width:183px;">主时基窗口</div>
<div class="box" style="left:1474px;top:306px;padding-left:11px;width:175px;">对应解码数据</div>
<svg width="1760" height="700" viewBox="0 0 1760 700" style="pointer-events:none"><path d="M283 231.8H451M283 462.7H451M1262 104.8H1474.5M1262 340.8H1474.5" stroke="#13b4ad" stroke-width="2.1"/><circle cx="459.7" cy="231.6" r="8.7" fill="none" stroke="#13b4ad" stroke-width="2.3"/><circle cx="459.7" cy="231.6" r="4.6" fill="#13b4ad"/><circle cx="459.8" cy="462.6" r="8.7" fill="none" stroke="#13b4ad" stroke-width="2.3"/><circle cx="459.8" cy="462.6" r="4.6" fill="#13b4ad"/><circle cx="1253" cy="104.5" r="8.7" fill="none" stroke="#13b4ad" stroke-width="2.3"/><circle cx="1253" cy="104.5" r="4.6" fill="#13b4ad"/><circle cx="1252.4" cy="340.8" r="8.7" fill="none" stroke="#13b4ad" stroke-width="2.3"/><circle cx="1252.4" cy="340.8" r="4.6" fill="#13b4ad"/></svg>
</body></html>
